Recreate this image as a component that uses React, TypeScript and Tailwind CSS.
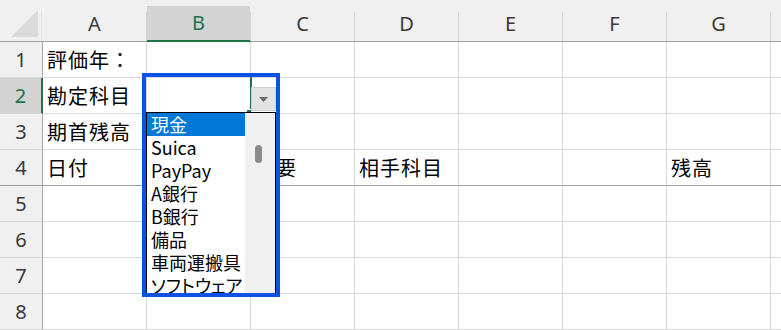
import React from 'react';

const cols = ['A', 'B', 'C', 'D', 'E', 'F', 'G'];

const data: Record<number, Record<string, string>> = {
  1: { A: '評価年：' },
  2: { A: '勘定科目' },
  3: { A: '期首残高' },
  4: { A: '日付', C: '摘要', D: '相手科目', G: '残高' },
};

const items = ['現金', 'Suica', 'PayPay', 'A銀行', 'B銀行', '備品', '車両運搬具', 'ソフトウェア'];

const HeaderCell: React.FC<{ label: string; active?: boolean }> = ({ label, active }) => (
  <div
    className={
      'flex items-end bg-[#f0f0f0] border-b ' +
      (active ? 'border-[#217346] pt-[6px]' : 'border-[#a0a0a0]')
    }
  >
    <div
      className={
        'flex-1 self-stretch flex items-center justify-center font-["Noto_Sans",sans-serif] text-[20px] ' +
        (active ? 'bg-[#d3d3d3] border-b border-[#217346] text-[#217346]' : 'pt-[6px] text-[#3a3a3a]')
      }
    >
      {label}
    </div>
    <div className="w-px h-[29px] bg-[#d4d4d4]" />
  </div>
);

export default function App() {
  return (
    <div className="relative w-[781px] h-[330px] overflow-hidden bg-white font-['Noto_Sans_CJK_JP',sans-serif] text-black">
      <div className="grid grid-cols-[43px_repeat(7,104px)_1fr] grid-rows-[42px_repeat(8,36px)]">
        {/* corner */}
        <div className="flex items-end justify-end bg-[#f0f0f0] border-b border-[#a0a0a0]">
          <svg width="43" height="41" viewBox="0 0 43 41">
            <polygon points="11,37 38,37 38,10" fill="#dadada" />
            <rect x="41" y="10" width="1" height="31" fill="#e2e2e2" />
          </svg>
        </div>
        {cols.map((c) => (
          <HeaderCell key={c} label={c} active={c === 'B'} />
        ))}
        <div className="bg-[#f0f0f0] border-b border-[#a0a0a0]" />

        {[1, 2, 3, 4, 5, 6, 7, 8].map((r) => {
          const line = r === 4 ? 'border-[#9c9c9c]' : 'border-[#d9d9d9]';
          return (
            <React.Fragment key={r}>
              <div
                className={
                  'flex items-center justify-center border-b font-["Noto_Sans",sans-serif] text-[20px] ' +
                  line +
                  (r === 2
                    ? ' bg-[#d3d3d3] text-[#217346] border-r-2 border-r-[#217346]'
                    : ' bg-[#f0f0f0] text-[#3a3a3a] border-r border-r-[#a6a6a6]')
                }
              >
                {r}
              </div>
              {cols.map((c) => (
                <div
                  key={c}
                  className={'flex items-center pl-[4px] border-r border-b border-r-[#d9d9d9] whitespace-nowrap text-[20px] tracking-[1px] ' + line}
                >
                  {data[r]?.[c] ?? ''}
                </div>
              ))}
              <div className={'border-b ' + line} />
            </React.Fragment>
          );
        })}
      </div>

      {/* active cell B2 edge + fill handle */}
      <div className="absolute left-[250px] top-[77px] w-[2px] h-[36px] bg-[#217346]" />
      <div className="absolute left-[246px] top-[109px] w-[6px] h-[5px] bg-[#217346] border border-white" />

      {/* dropdown button */}
      <div className="absolute left-[251px] top-[87px] w-[25px] h-[24px] flex items-center justify-center bg-[#e3e3e3] border border-[#d0d0d0]">
        <svg width="9" height="5" viewBox="0 0 9 5">
          <polygon points="0,0 9,0 4.5,5" fill="#6a6a6a" />
        </svg>
      </div>

      {/* dropdown list */}
      <div className="absolute left-[146px] top-[112px] w-[130px] h-[182px] flex border border-black bg-white overflow-hidden">
        <div className="w-[98px] flex flex-col">
          {items.map((it, i) => (
            <div
              key={it}
              className={
                'h-[23px] shrink-0 flex items-center pl-[4px] text-[18px] leading-[23px] whitespace-nowrap ' +
                (i === 0 ? 'bg-[#0078d7] text-white' : 'text-black') +
                (it === 'ソフトウェア' ? " [font-feature-settings:'palt']" : '')
              }
            >
              {it}
            </div>
          ))}
        </div>
        <div className="w-[30px] bg-[#f0f0f0] pt-[32px] pl-[10px]">
          <div className="w-[7px] h-[18px] rounded-full bg-[#8b8b8b]" />
        </div>
      </div>

      {/* highlight frame */}
      <div className="absolute left-[142px] top-[73px] w-[138px] h-[224px] border-4 border-[#0a52e6]" />
    </div>
  );
}
